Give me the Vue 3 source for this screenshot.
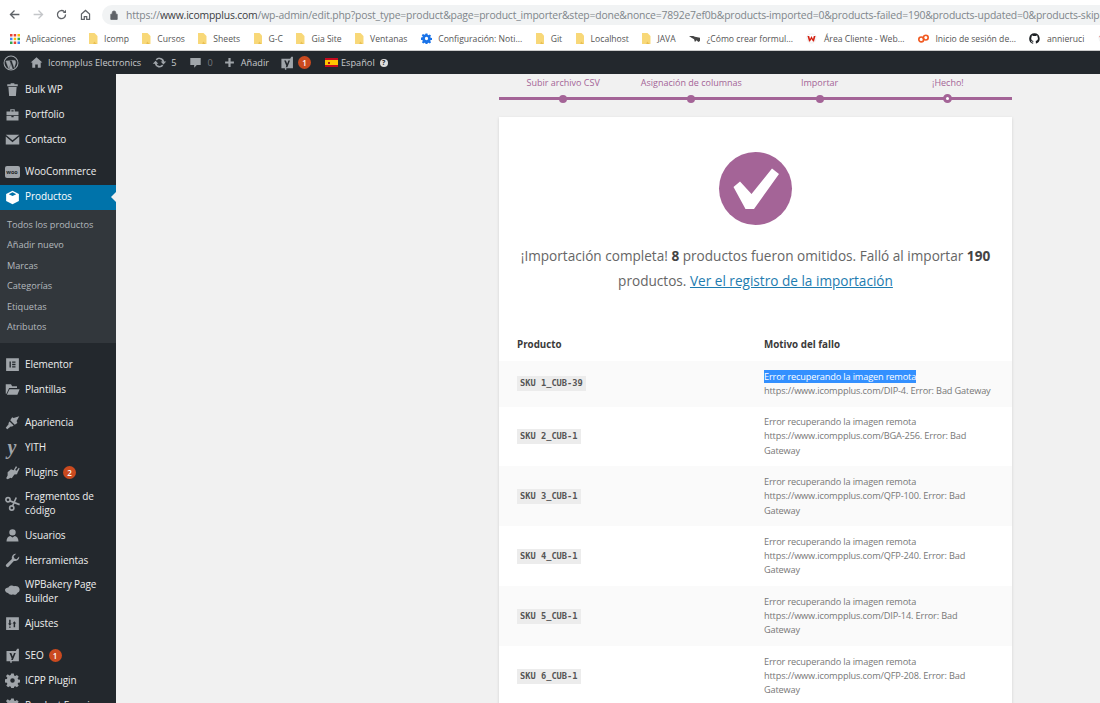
<script setup>
const bookmarks = [
  { k: 'apps', t: 'Aplicaciones' }, { k: 'folder', t: 'Icomp' }, { k: 'folder', t: 'Cursos' },
  { k: 'folder', t: 'Sheets' }, { k: 'folder', t: 'G-C' }, { k: 'folder', t: 'Gia Site' },
  { k: 'folder', t: 'Ventanas' }, { k: 'gear', t: 'Configuración: Noti...' }, { k: 'folder', t: 'Git' },
  { k: 'folder', t: 'Localhost' }, { k: 'folder', t: 'JAVA' }, { k: 'bird', t: '¿Cómo crear formul...' },
  { k: 'w', t: 'Área Cliente - Web...' }, { k: 'cp', t: 'Inicio de sesión de...' },
  { k: 'gh', t: 'annieruci' }, { k: 'w', t: '' }
]

const icons = {
  trash: 'M7.500 1.500h5V3H17v2.500H3V3h4.500zM4.500 6.500h11l-1 12h-9z',
  case: 'M7 3h6v3h5v5H2V6h5zM8.500 4.300V6h3V4.300zM2 12h6.500v1.500h3V12H18v6H2z',
  mail: 'M1 3.500h18L10 11zM1 6l9 7.500L19 6v10.500H1z',
  box: 'M10 1l8.500 4.300v9.400L10 19l-8.500-4.300V5.300zM10 3L5 5.500 10 8l5-2.500z',
  elem: 'M1.500 1.500h17v17h-17zM6 6v8h1.800V6zM9.500 6v1.700H14V6zM9.500 9.150v1.700H14v-1.700zM9.500 12.300V14H14v-1.700z',
  folder: 'M1 3h7l1.500 2.500H16V8H5.500L2 15.500H1zM6 9.500h13.500L16.500 17H2.500z',
  brush: 'M19 1.500l-7.500 2.500-2-1L7 7l6 6 3.500-2.500-1-2.500zM6 8.500l5.500 5.500-2.500 1.500-1-.5L3 19 1 17l4-5-.5-1z',
  plugin: 'M14.500 1.500l1.800 1-2.800 4 2 1.300 2.800-4 1.200 1-2.500 5-1 2.500-3.500.5-3.500 5-1.500-.8L3.500 19 1.500 17.500l2-3.500L3.500 9.500l4.500-4 3.500 1.500z',
  user: 'M10 1.500a4.300 4.300 0 110 8.600 4.300 4.300 0 010-8.600zM2 18c0-4.500 2.500-6.800 5-7.300l3 1.800 3-1.800c2.500.5 5 2.800 5 7.300z',
  wrench: 'M19 5.500a5.500 5.500 0 01-7.200 5L5 18a2.200 2.200 0 11-3.100-3.100l7.300-6.900A5.500 5.500 0 0115 1l-3.500 3.300 1 3 3 1 3.300-3.500z',
  cloud: 'M4.500 4.500c1.500-2.500 5.500-3 7.500-1.500 2.500-1 6 0 7 2.500 1.200 2.500 0 5.500-2.300 6-1 2.500-4 3.500-6 2-2.500 1.500-5.500.5-6.500-1.500C2 12 0 10 0 8s2.200-3.500 4.500-3.500z',
  settings: 'M1.500 1.500h17v17h-17zM5.500 5v5H4l2.500 3L9 10H7.500V5zM13.500 15v-5H15l-2.500-3L10 10h1.500v5zM5.500 14v1.500h2V14z',
  cog: 'M8.300 .8h3.400l.4 2.500 1.700.7 2.100-1.500 2.400 2.400-1.500 2.100.7 1.700 2.500.4v3.400l-2.500.4-.7 1.700 1.500 2.100-2.400 2.400-2.100-1.500-1.700.7-.4 2.500H8.300l-.4-2.500-1.700-.7-2.100 1.500-2.400-2.400 1.500-2.100-.7-1.700-2.500-.4V8.300l2.500-.4.7-1.700L1.300 4.100l2.400-2.400 2.100 1.500 1.700-.7zM10 7a3 3 0 100 6 3 3 0 000-6z',
  yoast: 'M2 4h12.500l1.700-3h2.300v16.500H9V19.500H7v-2H2zM6 6.500l3 7.500-.8 2h2.300L14.300 6.500H12l-1.700 4.700-1.900-4.700z'
}

const group1 = [
  { i: 'trash', t: 'Bulk WP' }, { i: 'case', t: 'Portfolio' }, { i: 'mail', t: 'Contacto' }
]
const group3 = [
  { i: 'elem', t: 'Elementor' }, { i: 'folder', t: 'Plantillas' }
]
const group4 = [
  { i: 'brush', t: 'Apariencia' }, { i: 'yith', t: 'YITH' }, { i: 'plugin', t: 'Plugins', b: 2 },
  { i: 'scissors', t: 'Fragmentos de código', tall: true }, { i: 'user', t: 'Usuarios' },
  { i: 'wrench', t: 'Herramientas' }, { i: 'cloud', t: 'WPBakery Page Builder', tall: true },
  { i: 'settings', t: 'Ajustes' }
]
const group5 = [
  { i: 'yoast', t: 'SEO', b: 1 }, { i: 'cog', t: 'ICPP Plugin' }, { i: 'cog', t: 'Product Enquiry' }
]
const groups = [group1, group3, group4, group5]
const sub = ['Todos los productos', 'Añadir nuevo', 'Marcas', 'Categorías', 'Etiquetas', 'Atributos']
const steps = ['Subir archivo CSV', 'Asignación de columnas', 'Importar', '¡Hecho!']
const rows = [
  ['SKU 1_CUB-39', 'DIP-4'], ['SKU 2_CUB-1', 'BGA-256'], ['SKU 3_CUB-1', 'QFP-100'],
  ['SKU 4_CUB-1', 'QFP-240'], ['SKU 5_CUB-1', 'DIP-14'], ['SKU 6_CUB-1', 'QFP-208']
]
const url = '/wp-admin/edit.php?post_type=product&page=product_importer&step=done&nonce=7892e7ef0b&products-imported=0&products-failed=190&products-updated=0&products-skipped=8'
</script>

<template>
  <div class="page">
    <header class="toolbar">
      <svg class="nav" viewBox="0 0 16 16"><path d="M14 8H3M8 3L3 8l5 5" fill="none" stroke="#5f6368" stroke-width="1.600"/></svg>
      <svg class="nav" viewBox="0 0 16 16"><path d="M2 8h11M8 3l5 5-5 5" fill="none" stroke="#c4c6c9" stroke-width="1.600"/></svg>
      <svg class="nav" viewBox="0 0 16 16"><path d="M13 8a5 5 0 11-1.500-3.500" fill="none" stroke="#5f6368" stroke-width="1.600"/><path d="M13.500 2v4h-4z" fill="#5f6368"/></svg>
      <svg class="nav" viewBox="0 0 16 16"><path d="M3 14V7.500L8 3l5 4.500V14H9.500v-3.500h-3V14z" fill="none" stroke="#5f6368" stroke-width="1.500"/></svg>
      <div class="omnibox">
        <svg class="lock" viewBox="0 0 10 12"><path d="M1 5h8v6.500H1zM2.800 5V3.200a2.200 2.200 0 014.400 0V5" fill="#5f6368" stroke="#5f6368"/></svg>
        <span class="url">https://<b>www.icompplus.com</b>{{ url }}</span>
      </div>
    </header>

    <nav class="bookmarks">
      <div v-for="(b, n) in bookmarks" :key="n" class="bm">
        <svg v-if="b.k === 'folder'" class="bmi" viewBox="0 0 10 13"><path d="M0 0h6.500L10 3.500V13H0z" fill="#f8d878"/><path d="M6 10l3 3H5z" fill="#e9bf52"/></svg>
        <svg v-else-if="b.k === 'apps'" class="bmi apps" viewBox="0 0 10 10">
          <g fill="#ea4335"><rect width="2.500" height="2.500"/><rect x="3.700" width="2.500" height="2.500"/></g><rect x="7.500" width="2.500" height="2.500" fill="#fbbc05"/>
          <rect y="3.700" width="2.500" height="2.500" fill="#4285f4"/><rect x="3.700" y="3.700" width="2.500" height="2.500" fill="#fbbc05"/><rect x="7.500" y="3.700" width="2.500" height="2.500" fill="#34a853"/>
          <rect y="7.500" width="2.500" height="2.500" fill="#34a853"/><rect x="3.700" y="7.500" width="2.500" height="2.500" fill="#ea4335"/><rect x="7.500" y="7.500" width="2.500" height="2.500" fill="#4285f4"/>
        </svg>
        <svg v-else-if="b.k === 'gear'" class="bmi wide" viewBox="0 0 20 20"><path :d="icons.cog" fill="#1a73e8" fill-rule="evenodd"/></svg>
        <svg v-else-if="b.k === 'bird'" class="bmi wide" viewBox="0 0 13 8"><path d="M0 1h5l2 1 6 1v4l-2 1-2-2-2 2-1-3-3-2z" fill="#444"/></svg>
        <svg v-else-if="b.k === 'w'" class="bmi wide" viewBox="0 0 11 10"><path d="M1 3.500C1 1.500 3 .5 5.500.5S10 1.500 10 3.500C10 7 8.500 9.500 5.500 9.500S1 7 1 3.500z" fill="#fff" stroke="#eee"/><path d="M1.500 2.500h1.700l.8 3 1.500-3 1.500 3 .8-3h1.700L8 8H7L5.500 5.500 4 8H3z" fill="#d32011"/></svg>
        <svg v-else-if="b.k === 'cp'" class="bmi wide" viewBox="0 0 12 10"><circle cx="3.500" cy="6" r="2.600" fill="none" stroke="#f15a22" stroke-width="1.800"/><circle cx="8.500" cy="4" r="2.600" fill="none" stroke="#f15a22" stroke-width="1.800"/></svg>
        <svg v-else class="bmi wide" viewBox="0 0 16 16"><path d="M8 .5a7.700 7.700 0 00-2.400 15c.4 0 .5-.2.500-.4v-1.400c-2.100.5-2.600-1-2.600-1-.3-.9-.8-1.100-.8-1.100-.7-.5 0-.5 0-.5.800 0 1.200.8 1.200.8.700 1.200 1.800.9 2.300.7 0-.5.300-.9.500-1.100-1.700-.2-3.500-.9-3.500-3.800 0-.8.300-1.500.8-2-.1-.2-.3-1 .1-2 0 0 .6-.2 2.100.8a7 7 0 013.800 0c1.500-1 2.100-.8 2.100-.8.400 1 .2 1.800.1 2 .5.500.8 1.200.8 2 0 2.900-1.800 3.600-3.500 3.800.3.200.5.700.5 1.400v2.100c0 .2.100.5.500.4A7.700 7.700 0 008 .5z" fill="#1b1f23"/></svg>
        <span v-if="b.t">{{ b.t }}</span>
      </div>
    </nav>

    <div class="adminbar">
      <svg class="ab wp" viewBox="0 0 20 20"><circle cx="10" cy="10" r="8.700" fill="none" stroke="#a0a5aa" stroke-width="1.300"/><path d="M3.500 7.500l3.700 9.700 2.300-6.500-1.400-3.500h-1zM8 6.800h5.500M11 6.800l3 9 1.800-5.500c.4-1.300.1-2.500-.7-3.500h-1.500zM9.900 11.500l-2 5.800c1.300.4 2.700.4 4 0z" fill="#a0a5aa" stroke="#a0a5aa" stroke-width=".5"/></svg>
      <svg class="ab home" viewBox="0 0 20 20"><path d="M10 2l9 8h-2.500v8H12v-5H8v5H3.500v-8H1z" fill="#a0a5aa"/></svg>
      <span class="site">Icompplus Electronics</span>
      <svg class="ab upd" viewBox="0 0 20 20"><path d="M10 3.500a6.500 6.500 0 016.300 5H19l-3.800 4-3.700-4h2.400a4.200 4.200 0 00-7.400-1.300L4.900 5.700A6.500 6.500 0 0110 3.500zM1 11.500l3.800-4 3.700 4H6.100a4.200 4.200 0 007.400 1.300l1.600 1.500A6.500 6.500 0 013.700 11.500z" fill="#a0a5aa"/></svg>
      <span class="num">5</span>
      <svg class="ab cmt" viewBox="0 0 20 20"><path d="M2 3h16v11h-6l-4 4v-4H2z" fill="#a0a5aa"/></svg>
      <span class="num dim">0</span>
      <svg class="ab plus" viewBox="0 0 20 20"><path d="M8 2h4v6h6v4h-6v6H8v-6H2V8h6z" fill="#a0a5aa"/></svg>
      <span class="add">Añadir</span>
      <svg class="ab yo" viewBox="0 0 20 20"><path :d="icons.yoast" fill="#a0a5aa" fill-rule="evenodd"/></svg>
      <span class="badge bar-badge">1</span>
      <span class="flag"><i></i></span>
      <span class="lang">Español</span>
      <span class="help">?</span>
    </div>

    <div class="body">
      <aside class="sidebar">
        <template v-for="(g, gi) in groups" :key="gi">
          <ul class="menu" :class="'g' + gi">
            <li v-for="m in g" :key="m.t" class="item" :class="{ tall: m.tall }">
              <span v-if="m.i === 'yith'" class="mi yith">y</span>
              <svg v-else-if="m.i === 'scissors'" class="mi" viewBox="0 0 20 20"><g fill="none" stroke="#a0a5aa" stroke-width="2.200"><circle cx="4" cy="5" r="2.800"/><circle cx="9" cy="16" r="2.800"/><path d="M6.500 6.500l13 5M10 13.500L15 2"/></g></svg>
              <svg v-else class="mi" viewBox="0 0 20 20"><path :d="icons[m.i]" fill="#a0a5aa" fill-rule="evenodd"/></svg>
              <span class="label">{{ m.t }}<span v-if="m.b" class="badge">{{ m.b }}</span></span>
            </li>
          </ul>
          <template v-if="gi === 0">
            <ul class="menu woo">
              <li class="item">
                <span class="mi woo-i">woo</span>
                <span class="label">WooCommerce</span>
              </li>
              <li class="item active">
                <svg class="mi" viewBox="0 0 20 20"><path :d="icons.box" fill="#fff" fill-rule="evenodd"/></svg>
                <span class="label">Productos</span>
              </li>
            </ul>
            <ul class="sub"><li v-for="s in sub" :key="s">{{ s }}</li></ul>
          </template>
        </template>
      </aside>

      <main class="main">
        <div class="column">
          <ol class="steps">
            <li v-for="(s, i) in steps" :key="s" :class="{ last: i === 3 }"><span>{{ s }}</span></li>
          </ol>
          <section class="card">
            <div class="check">
              <svg viewBox="0 0 73 73"><path d="M14.500 35L21 29.500 32.500 42 53 16.500 60 22 35 57H26.500z" fill="#fff"/></svg>
            </div>
            <p class="msg">¡Importación completa! <b>8</b> productos fueron omitidos. Falló al importar <b>190</b> productos. <a>Ver el registro de la importación</a></p>
            <table>
              <thead><tr><th>Producto</th><th>Motivo del fallo</th></tr></thead>
              <tbody>
                <tr v-for="(r, i) in rows" :key="r[0]">
                  <td class="c1"><code>{{ r[0] }}</code></td>
                  <td class="c2"><span :class="{ sel: i === 0 }">Error recuperando la imagen remota</span><br>https://www.icompplus.com/{{ r[1] }}. Error: Bad Gateway</td>
                </tr>
              </tbody>
            </table>
          </section>
        </div>
      </main>
    </div>
  </div>
</template>

<style>
html, body { margin: 0; background: #f1f1f1; }
</style>

<style scoped>
* { box-sizing: border-box; }
.page { width: 1100px; height: 703px; overflow: hidden; font-family: "Open Sans", "Noto Sans", sans-serif; display: flex; flex-direction: column; }
.toolbar { height: 27px; background: #fff; display: flex; align-items: center; padding: 2px 0 0 8px; flex: none; }
.nav { width: 13px; height: 13px; margin-right: 10.500px; flex: none; }
.omnibox { flex: 1; height: 20px; background: #f1f3f4; border-radius: 10px 0 0 10px; display: flex; align-items: center; padding-left: 8px; overflow: hidden; white-space: nowrap; min-width: 0; }
.lock { width: 8px; height: 10px; margin-right: 8px; flex: none; }
.url { font-size: 10.400px; color: #80868b; letter-spacing: -.18px; }
.url b { font-weight: 400; color: #3c4043; }
.bookmarks { height: 24px; background: #fff; border-bottom: 1px solid #ccc; display: flex; align-items: center; padding-left: 9.500px; gap: 13.450px; flex: none; white-space: nowrap; overflow: hidden; }
.bm { display: flex; align-items: center; gap: 6.500px; font-size: 8.600px; color: #555; }
.bmi { width: 8.500px; height: 11px; flex: none; }
.bmi.apps { width: 10px; height: 10px; }
.bmi.wide { width: 11px; }
.adminbar { height: 23px; background: #23282d; display: flex; align-items: center; color: #c8cacc; font-size: 9.200px; flex: none; white-space: nowrap; }
.ab { flex: none; }
.wp { width: 16px; height: 16px; margin-left: 3px; }
.home { width: 13px; height: 13px; margin-left: 11px; }
.site { margin-left: 5px; }
.upd { width: 15px; height: 15px; margin-left: 11px; }
.num { margin-left: 4px; }
.num.dim { color: #72777c; margin-left: 6px; }
.cmt { width: 13px; height: 13px; margin-left: 12px; }
.plus { width: 11px; height: 11px; margin-left: 11px; }
.add { margin-left: 6px; }
.yo { width: 14px; height: 14px; margin-left: 11px; }
.bar-badge { margin-left: 4px !important; }
.flag { width: 13px; height: 9px; margin-left: 14px; background: linear-gradient(#c60b1e 25%, #ffc400 25%, #ffc400 75%, #c60b1e 75%); position: relative; flex: none; }
.flag i { position: absolute; left: 3px; top: 3.500px; width: 2px; height: 2.500px; background: #ad1519; }
.lang { margin-left: 3px; }
.help { width: 8px; height: 8px; margin-left: 5px; border-radius: 50%; background: #ddd; color: #23282d; font-size: 7px; font-weight: 700; line-height: 8px; text-align: center; }
.body { flex: 1; display: flex; min-height: 0; background: #f1f1f1; }
.sidebar { width: 116px; flex: none; background: #23282d; padding-top: 3px; overflow: hidden; }
ul, ol { list-style: none; margin: 0; padding: 0; }
.menu { margin-bottom: 7.500px; }
.menu.woo { margin-bottom: 0; }
.item { display: flex; align-items: center; min-height: 25px; font-size: 10px; letter-spacing: -.08px; line-height: 13.500px; color: #eee; }
.item.tall { min-height: 38px; }
.item.active { background: #0073aa; color: #fff; position: relative; }
.item.active::after { content: ""; position: absolute; right: 0; top: 7px; border: 5.500px solid transparent; border-right-color: #f1f1f1; border-left-width: 0; }
.mi { width: 15px; height: 15px; margin-left: 4.500px; margin-right: 5.500px; flex: none; }
.yith { color: #a0a5aa; font: italic 700 20px/14px "Liberation Serif", serif; text-align: center; }
.woo-i { background: #a0a5aa; color: #23282d; border-radius: 2px; font-size: 5.500px; font-weight: 700; line-height: 12px; height: 12px; text-align: center; letter-spacing: 0; }
.label { padding-right: 8px; }
.badge { display: inline-block; width: 13px; height: 13px; border-radius: 50%; background: #ca4a1f; color: #fff; font-size: 8px; font-weight: 600; line-height: 13px; text-align: center; margin-left: 5px; vertical-align: 0; letter-spacing: 0; }
.sub { background: #32373c; padding: 5.500px 0 5.500px 7px; margin-bottom: 9.500px; font-size: 9.200px; letter-spacing: -.03px; line-height: 20.400px; color: #b4b9be; }
.main { flex: 1; min-width: 0; padding-left: 383px; }
.column { width: 513px; }
.steps { display: flex; height: 26px; border-bottom: 3px solid #a46497; color: #a46497; font-size: 9px; }
.steps li { flex: 1; text-align: center; position: relative; line-height: 18px; }
.steps li::after { content: ""; box-sizing: border-box; position: absolute; left: 50%; bottom: -5.500px; width: 8px; height: 8px; margin-left: -4px; border-radius: 50%; background: #a46497; }
.steps li.last::after { background: #fff; border: 3px solid #a46497; width: 9px; height: 9px; margin-left: -4.500px; bottom: -6px; }
.card { margin-top: 17px; background: #fff; padding: 35px 0 60px; box-shadow: 0 1px 3px rgba(0,0,0,.13); }
.check { width: 73px; height: 73px; margin: 0 auto; border-radius: 50%; background: #a46497; }
.check svg { display: block; }
.msg { margin: 18px 0 34px; padding: 0 20px; text-align: center; font-size: 13.600px; line-height: 25px; color: #666; }
.msg b { color: #444; font-weight: 700; }
.msg a { color: #1e7cb0; text-decoration: underline; }
table { width: 100%; border-collapse: collapse; table-layout: fixed; }
th { height: 34px; padding: 0 0 0 18px; text-align: left; font-size: 9.800px; font-weight: 700; color: #3a3a3a; }
th:first-child { width: 247px; }
th:last-child { padding-left: 18px; }
tbody tr:nth-child(odd) { background: #fafafa; }
td { padding: 8.500px 20px 8.500px 18px; vertical-align: middle; font-size: 9.200px; letter-spacing: -.15px; line-height: 14.300px; color: #777; }
code { display: inline-block; background: #ececec; padding: 0 3px; font: 700 8.700px/15px "DejaVu Sans Mono", monospace; color: #555; white-space: pre; letter-spacing: 0; }
.sel { background: #3390ff; color: #fff; }
</style>
